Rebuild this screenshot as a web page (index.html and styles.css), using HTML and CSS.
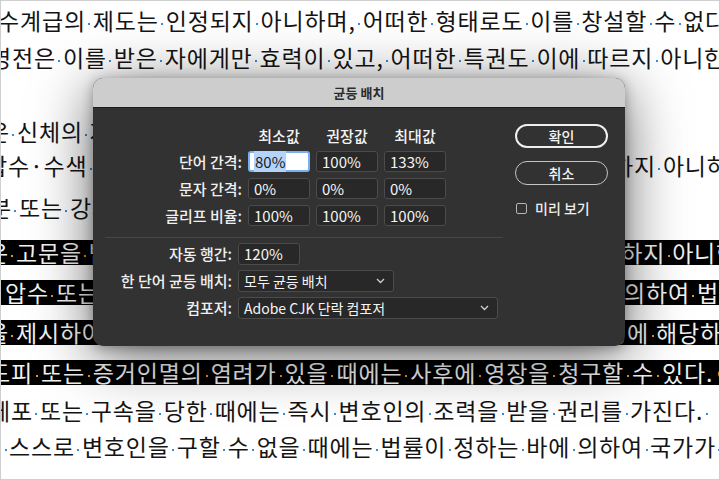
FILE: index.html
```html
<!DOCTYPE html>
<html>
<head>
    <meta charset="utf-8">
    <link rel="stylesheet" href="styles.css">
</head>
<body>
    <div class="page">
        <div class="story">
            <div class="line" style="margin-left: -3px">수계급의<i></i>제도는<i></i>인정되지<i></i>아니하며,<i></i>어떠한<i></i>형태로도<i></i>이를<i></i>창설할<i></i>수<i></i>없다.</div>
            <div class="line" style="margin-left: -11px">영전은<i></i>이를<i></i>받은<i></i>자에게만<i></i>효력이<i></i>있고,<i></i>어떠한<i></i>특권도<i></i>이에<i></i>따르지<i></i>아니한다.</div>
            <div class="line"></div>
            <div class="line" style="margin-left: -13px">은<i></i>신체의<i></i>자유를<i></i>가진다.</div>
            <div class="line gap-s" style="margin-left: -15px">압수·수색<i></i>또는<i></i>심문을<i></i>받지<i></i>아니하며,<i></i>법률과<i></i>적법한<i></i>절차에<i></i>의하지<i></i>아니하고는</div>
            <div class="line gap-l" style="margin-left: -11px">분<i></i>또는<i></i>강제노역을<i></i>받지<i></i>아니한다.</div>
            <div class="line hl gap-xl" style="margin-left: -14px">은<i></i>고문을<i></i>받지<i></i>아니하며,<i></i>형사상<i></i>자기에게<i></i>불리한<i></i>진술을<i></i>강요당하지<i></i>아니한다.</div>
            <div class="line hl" style="padding-left: 4px">압수<i></i>또는<i></i>수색을<i></i>할<i></i>때에는<i></i>적법한<i></i>절차에<i></i>따라<i></i>검사의<i></i>신청에<i></i>의하여<i></i>법관이<i></i>발부한</div>
            <div class="line hl" style="margin-left: -14px">을<i></i>제시하여야<i></i>한다.<i></i>다만,<i></i>현행범인인<i></i>경우와<i></i>장기<i></i>3년<i></i>이상의<i></i>형에<i></i>해당하는</div>
            <div class="line hl wide" style="margin-left: -12px">도피<i></i>또는<i></i>증거인멸의<i></i>염려가<i></i>있을<i></i>때에는<i></i>사후에<i></i>영장을<i></i>청구할<i></i>수<i></i>있다.<b class="eos">¶</b></div>
            <div class="line gap-m" style="margin-left: -12px">체포<i></i>또는<i></i>구속을<i></i>당한<i></i>때에는<i></i>즉시<i></i>변호인의<i></i>조력을<i></i>받을<i></i>권리를<i></i>가진다.<i></i></div>
            <div class="line gap-n" style="margin-left: 1px"><i></i>스스로<i></i>변호인을<i></i>구할<i></i>수<i></i>없을<i></i>때에는<i></i>법률이<i></i>정하는<i></i>바에<i></i>의하여<i></i>국가가<i></i>변호인을</div>
        </div>

        <div class="dialog">
            <div class="titlebar">균등 배치</div>
            <div class="dialog-body">
                <div class="main">
                    <div class="spacing-grid">
                        <span></span>
                        <span class="col-head">최소값</span>
                        <span class="col-head">권장값</span>
                        <span class="col-head">최대값</span>

                        <label>단어 간격:</label>
                        <div class="field focus"><span class="sel">80%</span></div>
                        <div class="field">100%</div>
                        <div class="field">133%</div>

                        <label>문자 간격:</label>
                        <div class="field">0%</div>
                        <div class="field">0%</div>
                        <div class="field">0%</div>

                        <label>글리프 비율:</label>
                        <div class="field">100%</div>
                        <div class="field">100%</div>
                        <div class="field">100%</div>
                    </div>

                    <div class="sep"></div>

                    <div class="option-grid">
                        <label>자동 행간:</label>
                        <div class="field short">120%</div>

                        <label>한 단어 균등 배치:</label>
                        <div class="field select mid">
                            <span>모두 균등 배치</span>
                            <svg class="chev" width="9" height="6" viewBox="0 0 9 6"><polyline points="1,1 4.5,4.5 8,1" fill="none" stroke="#cfcfcf" stroke-width="1.3"/></svg>
                        </div>

                        <label>컴포저:</label>
                        <div class="field select long">
                            <span>Adobe CJK 단락 컴포저</span>
                            <svg class="chev" width="9" height="6" viewBox="0 0 9 6"><polyline points="1,1 4.5,4.5 8,1" fill="none" stroke="#cfcfcf" stroke-width="1.3"/></svg>
                        </div>
                    </div>
                </div>

                <div class="side">
                    <button class="btn btn-default">확인</button>
                    <button class="btn">취소</button>
                    <label class="check"><span class="box"></span>미리 보기</label>
                </div>
            </div>
        </div>
    </div>
</body>
</html>
```

FILE: styles.css
```css
* {
    box-sizing: border-box;
}

body {
    margin: 0;
    background: #fff;
    font-family: "Noto Sans CJK KR", "Noto Sans", sans-serif;
}

.page {
    position: relative;
    width: 720px;
    height: 480px;
    overflow: hidden;
    border: 1px solid #cfcfcf;
    background: #fff;
}

/* 배경 본문 */
.story {
    padding-top: 7px;
}

.line {
    height: 25px;
    line-height: 25px;
    margin-top: 12px;
    font-size: 23px;
    letter-spacing: 0.8px;
    color: #141414;
    white-space: nowrap;
}

.line:first-child {
    margin-top: 0;
}

.line i {
    display: inline-block;
    width: 2px;
    height: 2px;
    margin: 0 2.5px;
    background: #2f8de4;
    vertical-align: 5px;
}

.line.hl {
    margin-top: 15px;
    background: #000;
    color: #f2f2f2;
}

.line.hl i {
    background: #f08a1c;
}

.line.wide i {
    margin: 0 3px;
}

.line .eos {
    color: #f08a1c;
    font-weight: normal;
    font-size: 15px;
    margin-left: 1px;
}

.gap-s { margin-top: 9px; }
.gap-l { margin-top: 17px; }
.line.gap-xl { margin-top: 20px; }
.gap-m { margin-top: 13px; }
.gap-n { margin-top: 11px; }

/* 대화상자 */
.dialog {
    position: absolute;
    left: 92px;
    top: 77px;
    width: 532px;
    height: 268px;
    border-radius: 10px;
    overflow: hidden;
    background: #323232;
    display: flex;
    flex-direction: column;
    box-shadow: 0 10px 60px rgba(0, 0, 0, 0.6), 0 2px 12px rgba(0, 0, 0, 0.3);
    font-size: 15px;
    font-weight: 500;
    color: #ececec;
}

.titlebar {
    height: 30px;
    line-height: 29px;
    text-align: center;
    background: #cdcdcd;
    border-bottom: 1px solid #1b1b1b;
    color: #2b2b2b;
    font-size: 13px;
    font-weight: 700;
}

.dialog-body {
    flex: 1;
    display: flex;
}

.main {
    width: 422px;
    padding-top: 18px;
}

.spacing-grid {
    display: grid;
    grid-template-columns: 139px 62px 62px 62px;
    grid-template-rows: 19px 21px 21px 21px;
    column-gap: 6px;
    row-gap: 6px;
    padding-left: 10px;
}

.col-head {
    text-align: center;
    line-height: 19px;
    color: #f4f4f4;
    white-space: nowrap;
}

.spacing-grid label,
.option-grid label {
    text-align: right;
    line-height: 21px;
    color: #f0f0f0;
    white-space: nowrap;
}

.field {
    height: 21px;
    line-height: 19px;
    padding-left: 5px;
    background: #282828;
    border: 1px solid #4b4b4b;
    border-radius: 3px;
    color: #f4f4f4;
    font-size: 15px;
    font-weight: 400;
}

.field.focus {
    background: #fff;
    border: 2px solid #79aef0;
    line-height: 17px;
    padding-left: 4px;
    color: #1b1b1b;
}

.field .sel {
    background: #b3d3f8;
    padding: 0 1px;
}

.sep {
    width: 398px;
    margin: 11px 0 0 12px;
    border-top: 1px solid #474747;
}

.option-grid {
    display: grid;
    grid-template-columns: 129px auto;
    grid-auto-rows: 22px;
    column-gap: 6px;
    row-gap: 5px;
    margin-top: 5px;
    padding-left: 10px;
    justify-items: start;
}

.option-grid label {
    justify-self: end;
    line-height: 22px;
}

.option-grid .field {
    height: 22px;
    line-height: 20px;
}

.field.short { width: 62px; }
.field.mid { width: 156px; }
.field.long { width: 260px; }

.field.select {
    display: flex;
    align-items: center;
    justify-content: space-between;
    padding-right: 8px;
    font-size: 14px;
}

.chev {
    display: block;
}

.side {
    width: 93px;
    margin-left: auto;
    margin-right: 17px;
    padding-top: 16px;
    display: flex;
    flex-direction: column;
}

.btn {
    height: 24px;
    margin-bottom: 13px;
    padding: 0;
    border: 1.5px solid #c4c4c4;
    border-radius: 12px;
    background: transparent;
    color: #f4f4f4;
    font-family: inherit;
    font-size: 14px;
    font-weight: 500;
}

.btn-default {
    border: 2px solid #efefef;
}

.check {
    display: flex;
    align-items: center;
    gap: 8px;
    height: 16px;
    margin-top: 2px;
    padding-left: 1px;
    color: #ececec;
    font-size: 14px;
}

.check .box {
    width: 11px;
    height: 11px;
    border: 1px solid #b5b5b5;
    border-radius: 2px;
}
```
